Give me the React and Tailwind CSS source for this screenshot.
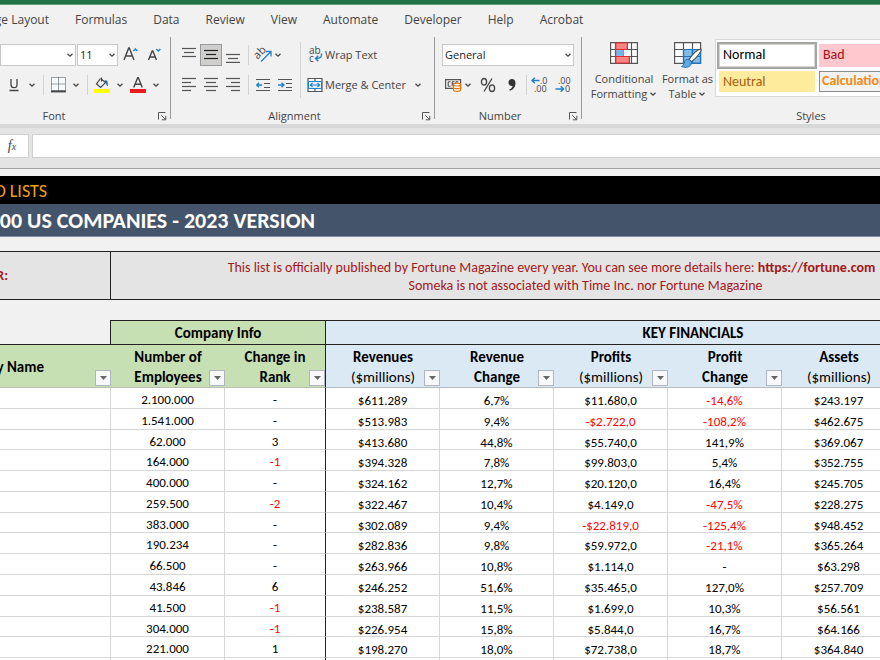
import React, { useState } from 'react';

const tabs = ['Formulas', 'Data', 'Review', 'View', 'Automate', 'Developer', 'Help', 'Acrobat'];

const rows = [
  ['2.100.000', '-', '$611.289', '6,7%', '$11.680,0', '-14,6%', '$243.197'],
  ['1.541.000', '-', '$513.983', '9,4%', '-$2.722,0', '-108,2%', '$462.675'],
  ['62.000', '3', '$413.680', '44,8%', '$55.740,0', '141,9%', '$369.067'],
  ['164.000', '-1', '$394.328', '7,8%', '$99.803,0', '5,4%', '$352.755'],
  ['400.000', '-', '$324.162', '12,7%', '$20.120,0', '16,4%', '$245.705'],
  ['259.500', '-2', '$322.467', '10,4%', '$4.149,0', '-47,5%', '$228.275'],
  ['383.000', '-', '$302.089', '9,4%', '-$22.819,0', '-125,4%', '$948.452'],
  ['190.234', '-', '$282.836', '9,8%', '$59.972,0', '-21,1%', '$365.264'],
  ['66.500', '-', '$263.966', '10,8%', '$1.114,0', '-', '$63.298'],
  ['43.846', '6', '$246.252', '51,6%', '$35.465,0', '127,0%', '$257.709'],
  ['41.500', '-1', '$238.587', '11,5%', '$1.699,0', '10,3%', '$56.561'],
  ['304.000', '-1', '$226.954', '15,8%', '$5.844,0', '16,7%', '$64.166'],
  ['221.000', '1', '$198.270', '18,0%', '$72.738,0', '18,7%', '$364.840'],
  ['', '', '', '', '', '', ''],
];

const columns = [
  { top: 'Number of', bottom: 'Employees', info: true },
  { top: 'Change in', bottom: 'Rank', info: true, last: true },
  { top: 'Revenues', bottom: '($millions)', unit: true },
  { top: 'Revenue', bottom: 'Change' },
  { top: 'Profits', bottom: '($millions)', unit: true },
  { top: 'Profit', bottom: 'Change' },
  { top: 'Assets', bottom: '($millions)', unit: true },
];

function Chevron() {
  return (
    <svg width="8" height="8" viewBox="0 0 8 8" fill="none" stroke="#444" strokeWidth="1.3">
      <path d="M1.5 2.8 4 5.2 6.5 2.8" />
    </svg>
  );
}

function MoreButton({ label }) {
  return (
    <button aria-label={label} className="flex h-5 w-2 items-center justify-center">
      <Chevron />
    </button>
  );
}

function IconButton({ label, className, children }) {
  return (
    <button aria-label={label} className={`flex h-[22px] shrink-0 items-center justify-center ${className}`}>
      {children}
    </button>
  );
}

function Divider({ className = '' }) {
  return <div className={`h-5 w-px bg-[#d2d2d2] ${className}`} />;
}

function RibbonSelect({ label, value, className }) {
  return (
    <div className={`relative h-[22px] ${className}`}>
      <select
        aria-label={label}
        defaultValue={value}
        className="h-full w-full appearance-none border border-[#c8c8c8] bg-white pl-[2px] text-[11px] text-[#222]"
      >
        <option value={value}>{value}</option>
      </select>
      <span className="pointer-events-none absolute right-[2px] top-[7px]">
        <Chevron />
      </span>
    </div>
  );
}

function Group({ label, className, labelClass = '', launcher = true, children }) {
  return (
    <div className={`flex shrink-0 flex-col ${className}`}>
      <div className="h-[71px]">{children}</div>
      <div className="flex h-4 items-center">
        <span className={`flex-1 text-center leading-4 ${labelClass}`}>{label}</span>
        {launcher && (
          <button aria-label={`${label} settings`} className="flex h-4 w-4 items-center justify-center">
            <svg width="9" height="9" viewBox="0 0 9 9" fill="none" stroke="#555">
              <path d="M.5 7.5v-7h7M3.2 3.2l4.3 4.3M7.8 3.8v4h-4" />
            </svg>
          </button>
        )}
      </div>
    </div>
  );
}

// Text lines, used by every paragraph alignment icon
function Lines({ lines, dark }) {
  return (
    <svg width="14" height="16" viewBox="0 0 14 16" stroke={dark ? '#222' : '#555'} strokeWidth="1.2">
      {lines.map(([x1, x2, y]) => (
        <path key={y} d={`M${x1} ${y}H${x2}`} />
      ))}
    </svg>
  );
}

function IndentIcon({ right }) {
  return (
    <svg width="15" height="14" viewBox="0 0 15 14" fill="none" strokeWidth="1.2">
      <path d="M0 1.5h14M8 5.5h6M8 9.5h6M0 12.5h14" stroke="#555" />
      {right ? (
        <path d="M0 7h5.5M3.5 4.8 5.8 7 3.5 9.2" stroke="#1e82cf" strokeWidth="1.5" />
      ) : (
        <path d="M6.2 7H.8M3 4.8.7 7 3 9.2" stroke="#1e82cf" strokeWidth="1.5" />
      )}
    </svg>
  );
}

function DecimalIcon({ decrease }) {
  return (
    <svg width="16" height="18" viewBox="0 0 16 18" fill="none" overflow="visible">
      <g fill="#444" fontSize="9" fontFamily="Open Sans, sans-serif">
        {decrease ? (
          <>
            <text x="3" y="8">.00</text>
            <text x="10" y="16">0</text>
          </>
        ) : (
          <>
            <text x="9" y="8">.0</text>
            <text x="3" y="16">.00</text>
          </>
        )}
      </g>
      {decrease ? (
        <path d="M.5 13h8M5.700 10.200 8.500 13l-2.800 2.800" stroke="#1e82cf" strokeWidth="1.5" />
      ) : (
        <path d="M8.500 4.500H1M3.800 1.700 1 4.500l2.800 2.800" stroke="#1e82cf" strokeWidth="1.5" />
      )}
    </svg>
  );
}

function FontGroup() {
  return (
    <Group label="Font" className="w-[170px]" labelClass="pr-[46px]">
      <div className="flex h-9 items-center">
        <RibbonSelect label="Font name" value="" className="w-[76px]" />
        <RibbonSelect label="Font size" value="11" className="ml-px w-[41px]" />
        <IconButton label="Increase font size" className="ml-[5px] w-4">
          <svg width="16" height="18" viewBox="0 0 16 18" fill="none" strokeWidth="1.4">
            <path d="M1 14 5.700 2h.6L11 14M2.700 10h6.600" stroke="#444" />
            <path d="m10.400 5 2-2 2 2" stroke="#1e82cf" />
          </svg>
        </IconButton>
        <IconButton label="Decrease font size" className="ml-2 w-4">
          <svg width="16" height="18" viewBox="0 0 16 18" fill="none" strokeWidth="1.4">
            <path d="M1.500 14 5.200 5h.6l3.700 9M2.800 11h5.400" stroke="#444" />
            <path d="m9.400 3 2 2 2-2" stroke="#1e82cf" />
          </svg>
        </IconButton>
      </div>
      <div className="flex h-6 items-center">
        <IconButton label="Underline" className="w-7">
          <svg width="10" height="14" viewBox="0 0 10 14" fill="none" stroke="#444" strokeWidth="1.3">
            <path d="M2 1v5.500C2 8.600 3 9.700 5 9.700s3-1.100 3-3.200V1M.5 12.500h9" />
          </svg>
        </IconButton>
        <MoreButton label="Underline options" />
        <Divider className="ml-[7px]" />
        <IconButton label="Borders" className="w-7">
          <svg width="15" height="16" viewBox="0 0 15 16" fill="none" stroke="#444">
            <path d="M.5.5h14v13H.5zM7.500.5v13M.5 7h14" fill="#f4fafd" strokeDasharray="1 1" />
            <path d="M0 14.500h15" strokeWidth="1.800" />
          </svg>
        </IconButton>
        <MoreButton label="Border options" />
        <Divider className="ml-[7px]" />
        <IconButton label="Fill color" className="w-7">
          <svg width="16" height="16" viewBox="0 0 16 16" fill="none">
            <path d="M6.500 1.500 2.500 6.800 6.600 10.500 11.500 5.600 7.500 2.300M7.500.6v4" stroke="#444" strokeWidth="1.200" />
            <path d="M10.500 3.500c2.400-.6 3.800.8 3.300 5.800-1.800-.5-1.200-3.300-2.600-4.100z" fill="#1c6fb5" />
            <path d="M0 12h16v4H0z" fill="#ffff00" />
          </svg>
        </IconButton>
        <MoreButton label="Fill color options" />
        <IconButton label="Font color" className="w-7">
          <svg width="16" height="16" viewBox="0 0 16 16" fill="none">
            <path d="M3.700 10.500 7.700.8h.6l4 9.700M5.200 7.200h5.600" stroke="#444" strokeWidth="1.400" />
            <path d="M0 12h16v4H0z" fill="#ed1c1c" />
          </svg>
        </IconButton>
        <MoreButton label="Font color options" />
      </div>
    </Group>
  );
}

function AlignmentGroup() {
  return (
    <Group label="Alignment" className="w-[263px]">
      <div className="flex">
        <div className="w-[129px] pl-[7px]">
          <div className="flex h-9 items-center">
            <IconButton label="Top align" className="w-[22px]">
              <Lines lines={[[0, 14, 1.5], [2, 12, 5.5], [0, 14, 9.5]]} />
            </IconButton>
            <IconButton label="Middle align" className="w-[22px] border border-[#999] bg-[#d0cfcd]">
              <Lines dark lines={[[0, 14, 3.5], [2, 12, 7.5], [0, 14, 11.5]]} />
            </IconButton>
            <IconButton label="Bottom align" className="w-[22px]">
              <Lines lines={[[0, 14, 7.5], [2, 12, 11.5], [0, 14, 15.4]]} />
            </IconButton>
            <Divider className="ml-1" />
            <IconButton label="Orientation" className="ml-[3px] w-[22px]">
              <svg width="18" height="18" viewBox="0 0 18 18" fill="none" overflow="visible">
                <text x="0" y="11" fontSize="11" fill="#444" fontFamily="Open Sans, sans-serif" transform="rotate(-45 5 8)">ab</text>
                <path d="M7 15.500 16.500 6M12 5.500h5v5" stroke="#1e82cf" strokeWidth="1.300" />
              </svg>
            </IconButton>
            <MoreButton label="Orientation options" />
          </div>
          <div className="flex h-6 items-center">
            <IconButton label="Align left" className="w-[22px]">
              <Lines lines={[[0, 14, 1.5], [0, 9, 5.5], [0, 14, 9.5], [0, 9, 13.5]]} />
            </IconButton>
            <IconButton label="Center" className="w-[22px]">
              <Lines lines={[[0, 14, 1.5], [2, 12, 5.5], [0, 14, 9.5], [2, 12, 13.5]]} />
            </IconButton>
            <IconButton label="Align right" className="w-[22px]">
              <Lines lines={[[0, 14, 1.5], [5, 14, 5.5], [0, 14, 9.5], [5, 14, 13.5]]} />
            </IconButton>
            <Divider className="ml-1" />
            <IconButton label="Decrease indent" className="ml-[3px] w-[22px]">
              <IndentIcon />
            </IconButton>
            <IconButton label="Increase indent" className="w-[22px]">
              <IndentIcon right />
            </IconButton>
          </div>
        </div>
        <div className="mt-[5px] h-14 w-px bg-[#d2d2d2]" />
        <div className="pl-[6px]">
          <button className="flex h-9 items-center gap-[2px]">
            <svg width="16" height="18" viewBox="0 0 16 18" fill="none" overflow="visible">
              <g fill="#444" fontSize="10" fontFamily="Open Sans, sans-serif">
                <text x="2" y="8">ab</text>
                <text x="2" y="16">c</text>
              </g>
              <path d="M14.500 7.500c.5 3.500-1 5-5.500 5M11.300 9.800 8.500 12.500l2.800 2.700" stroke="#1e82cf" strokeWidth="1.400" />
            </svg>
            Wrap Text
          </button>
          <div className="flex h-6 items-center gap-2">
            <button className="flex items-center gap-[2px]">
              <svg width="16" height="16" viewBox="0 0 16 16" fill="none">
                <path d="M1 1.500h14v13H1zM8 1.500v3M8 12v2.500" stroke="#555" fill="#fff" strokeWidth="1.200" />
                <path d="M1.500 4.500h13v7h-13z" fill="#e6f2fb" stroke="#1e82cf" />
                <path d="M3.500 8h9M5.500 6 3.500 8l2 2M10.500 6l2 2-2 2" stroke="#1e82cf" strokeWidth="1.200" />
              </svg>
              Merge &amp; Center
            </button>
            <MoreButton label="Merge options" />
          </div>
        </div>
      </div>
    </Group>
  );
}

function NumberGroup() {
  return (
    <Group label="Number" className="w-[146px]">
      <div className="flex h-9 items-center px-[7px]">
        <RibbonSelect label="Number format" value="General" className="flex-1" />
      </div>
      <div className="flex h-6 items-center pl-[7px]">
        <IconButton label="Accounting format" className="w-[22px]">
          <svg width="17" height="14" viewBox="0 0 17 14" fill="none">
            <path d="M.600 1.600h15v8.800H.6z" stroke="#555" strokeWidth="1.200" />
            <path d="M5.500 3.800H3.200v4.400h2.300M9.500 3.800H7.200v4.400M7.200 6H9M13.200 3.800h-2.300V6" stroke="#444" />
            <path d="M8.500 6.500c0-1.800 7-1.800 7 0v5.500c0 1.800-7 1.800-7 0z" fill="#fff" stroke="#e8790c" strokeWidth="1.200" />
            <path d="M8.500 6.800c0 1.600 7 1.600 7 0M8.500 9.500c0 1.600 7 1.600 7 0" stroke="#e8790c" strokeWidth="1.200" />
          </svg>
        </IconButton>
        <MoreButton label="Accounting options" />
        <IconButton label="Percent style" className="w-8">
          <svg width="16" height="16" viewBox="0 0 16 16" fill="none" stroke="#444" strokeWidth="1.300">
            <ellipse cx="4" cy="4.800" rx="2.600" ry="3.300" />
            <ellipse cx="12" cy="11.200" rx="2.600" ry="3.300" />
            <path d="M12 1.500 4 14.500" />
          </svg>
        </IconButton>
        <IconButton label="Comma style" className="w-4">
          <svg width="8" height="12" viewBox="0 0 8 12" fill="#333">
            <path d="M3.800 0C6.200 0 7.500 1.600 7.500 4.200c0 3.600-2.300 6.700-5.700 7.500l-.5-1.200C3.200 9.700 4.400 8.400 4.600 6.900 2.300 7.400.5 5.900.5 3.600.5 1.500 1.900 0 3.800 0z" />
          </svg>
        </IconButton>
        <Divider className="ml-[6px]" />
        <IconButton label="Increase decimal" className="w-6">
          <DecimalIcon />
        </IconButton>
        <IconButton label="Decrease decimal" className="w-6">
          <DecimalIcon decrease />
        </IconButton>
      </div>
    </Group>
  );
}

function StylesGroup() {
  return (
    <Group label="Styles" className="w-[458px]" launcher={false}>
      <div className="flex pl-[6px]">
        <button className="flex w-[72px] flex-col items-center pt-[5px] leading-[15px]">
          <svg width="28" height="22" viewBox="0 0 28 22" fill="none" className="mb-[7px]">
            <path d="M.6.6h26.800v20.800H.6z" fill="#fff" />
            <path d="M.6.6h26.800v20.800H.6zM.6 7.500h26.800M.6 14.500h26.800M5.500.6v20.800M21.500.6v20.800M13.500.6v20.800" stroke="#555" strokeWidth="1.200" />
            <path d="M5.600 1h11.800v6.500H5.600zM5.600 14.500h13.800v6.500H5.600z" fill="#ff8585" stroke="#e32a2a" strokeWidth="1.200" />
            <path d="M5.600 8.100h8.200v5.800H5.600z" fill="#76b5ea" />
            <path d="M5.600 1v20" stroke="#e32a2a" strokeWidth="1.200" />
          </svg>
          <span>Conditional</span>
          <span className="flex items-center gap-[2px]">Formatting <Chevron /></span>
        </button>
        <button className="flex w-[55px] flex-col items-center pt-[5px] leading-[15px]">
          <svg width="30" height="27" viewBox="0 0 30 27" fill="none" className="mb-[2px]">
            <path d="M1.600.6h26v20.800h-26z" fill="#fff" />
            <path d="M10.500 7.500h17v13.900h-17z" fill="#7fbcec" />
            <path d="M1.600.6h26v20.800h-26zM1.600 7.500h26M1.600 14.500h26M10.500.6v20.800M19.500.6v20.800" stroke="#555" strokeWidth="1.200" />
            <path d="M10.500 21.400V7.500h17M19.500 7.500v13.900M10.500 14.500h17M27.500 9.500v11.900h-17" stroke="#1e74bd" strokeWidth="1.200" />
            <path d="M16 17.500c4-6 9-10.500 12-10.300 1.500.6-3.500 8-9.500 12.600z" fill="#fff" stroke="#555" strokeWidth="1.200" />
            <path d="M16 17.300c-3.500-.3-4.500 1.500-5 4-.4 1.600-1.200 2.500-2.500 3.200 4.500 1.800 10 .8 10-4.300z" fill="#5ea9e4" stroke="#1e74bd" />
          </svg>
          <span className="whitespace-nowrap">Format as</span>
          <span className="flex items-center gap-[2px]">Table <Chevron /></span>
        </button>
        <div className="mt-[2px] grid h-[58px] flex-1 grid-cols-[100px_100px] content-start gap-x-[2px] gap-y-[2px] border border-[#d8d8d8] bg-white p-[2px] pl-px font-[Calibri,Carlito,Lato,sans-serif] text-[14px]">
          <button className="h-[27px] border-2 border-[#a5a5a1] bg-white pb-[2px] pl-1 text-left text-black outline outline-offset-[-3px] outline-[#d5d5d2]">
            Normal
          </button>
          <button className="my-[2px] bg-[#ffc7ce] pb-[2px] pl-1 text-left text-[#a80c16]">Bad</button>
          <button className="mx-[2px] h-[21px] bg-[#ffeb9c] pb-[2px] pl-1 text-left text-[#a5600c]">Neutral</button>
          <button className="h-[21px] border border-[#8c8c8c] bg-[#f2f2f2] pb-[2px] pl-[2px] text-left font-bold leading-[18px] text-[#f08a18]">
            Calculation
          </button>
        </div>
      </div>
    </Group>
  );
}

function RibbonDivider() {
  return <div className="mb-[5px] w-px shrink-0 bg-[#9b9b9b]" />;
}

function FilterButton({ label }) {
  return (
    <button
      aria-label={`Filter ${label}`}
      className="absolute bottom-px right-0 flex h-4 w-4 items-center justify-center border border-[#b0b6c0] bg-[#f6f8fb]"
    >
      <svg width="7" height="4" viewBox="0 0 7 4" fill="#666">
        <path d="M0 0h7L3.500 4z" />
      </svg>
    </button>
  );
}

function CompanyTable() {
  return (
    <table className="mt-5 h-[359px] w-full min-w-[1060px] table-fixed border-separate border-spacing-0 text-center text-black">
      <colgroup>
        <col className="w-[111px]" />
        <col className="w-[114px]" />
        <col className="w-[101px]" />
        <col className="w-[114px]" />
        <col className="w-[114px]" />
        <col className="w-[114px]" />
        <col className="w-[114px]" />
        <col className="w-[114px]" />
        <col />
      </colgroup>
      <thead className="text-[15px]">
        <tr className="h-[25px]">
          <td className="border-b border-r border-[#222]" />
          <th colSpan={2} className="border-y border-r border-[#222] bg-[#c6e0b4] p-0 leading-5">Company Info</th>
          <th colSpan={6} className="border-y border-[#222] bg-[#dbe9f5] p-0 leading-5">KEY FINANCIALS</th>
        </tr>
        <tr className="h-[43px]">
          <th className="relative border-b border-[#b9bfb5] bg-[#c6e0b4] px-0 pb-0 pt-[2px]">
            <div className="flex w-11 justify-end overflow-hidden whitespace-nowrap">Company Name</div>
            <FilterButton label="Company Name" />
          </th>
          {columns.map((col, i) => (
            <th
              key={i}
              className={`relative border-b px-0 pb-0 pt-[2px] leading-5 ${col.info ? 'border-[#b9bfb5] bg-[#c6e0b4]' : 'border-[#b4bac0] bg-[#dbe9f5]'} ${col.last ? 'border-r border-r-[#222]' : ''}`}
            >
              <div>{col.top}</div>
              <div className={col.unit ? 'font-normal' : ''}>{col.bottom}</div>
              <FilterButton label={`${col.top} ${col.bottom}`} />
            </th>
          ))}
          <th className="border-b border-[#b4bac0] bg-[#dbe9f5]" />
        </tr>
      </thead>
      <tbody className="bg-white text-[13px] leading-[13px]">
        {rows.map((row, r) => (
          <tr key={r}>
            <td className="border-b border-r border-[#d6d6d6] p-0" />
            {row.map((value, c) => (
              <td
                key={c}
                className={`border-b border-r border-[#d6d6d6] px-0 pb-0 align-top ${c > 1 ? 'pt-[6px]' : 'pt-[5px]'} ${c === 1 ? 'border-r-[#222]' : ''} ${value.length > 1 && value[0] === '-' ? 'text-[#ff0000]' : ''}`}
              >
                {value || '\u00a0'}
              </td>
            ))}
            <td className="border-b border-[#d6d6d6] p-0" />
          </tr>
        ))}
      </tbody>
    </table>
  );
}

export default function App() {
  const [formula, setFormula] = useState('');

  return (
    <div className="flex h-screen flex-col overflow-hidden bg-[#f1f1f1] font-['Segoe_UI','Open_Sans','Noto_Sans',sans-serif] text-[11px] text-[#444]">
      <div className="h-[5px] shrink-0 border-b border-[#5fa37c] bg-[#217346]" />

      {/* Ribbon tabs */}
      <nav className="flex h-8 shrink-0 items-center gap-[26px] pb-[2px] text-[12px]">
        <button className="flex w-[49px] justify-end overflow-hidden whitespace-nowrap">Page Layout</button>
        {tabs.map((tab) => (
          <button key={tab}>{tab}</button>
        ))}
      </nav>

      {/* Ribbon */}
      <div className="flex h-[87px] shrink-0 overflow-hidden">
        <FontGroup />
        <RibbonDivider />
        <AlignmentGroup />
        <RibbonDivider />
        <NumberGroup />
        <RibbonDivider />
        <StylesGroup />
      </div>

      {/* Formula bar */}
      <div className="h-1 shrink-0 bg-[#d8d8d8]" />
      <div className="flex h-[41px] shrink-0 gap-[3px] border-b border-[#a3a3a3] bg-[#e4e4e4] pb-[10px] pt-[6px]">
        <button aria-label="Insert function" className="w-[29px] border border-l-0 border-[#cfcfcf] bg-white pr-1 font-['Liberation_Serif',serif] text-[14px] italic leading-none text-[#444]">
          f<span className="text-[10px]">x</span>
        </button>
        <input
          aria-label="Formula bar"
          value={formula}
          onChange={(e) => setFormula(e.target.value)}
          className="min-w-0 flex-1 border border-r-0 border-[#cfcfcf] bg-white px-2 outline-none"
        />
      </div>

      {/* Sheet */}
      <main className="min-h-0 flex-1 overflow-hidden pt-[7px] font-[Calibri,Carlito,Lato,sans-serif]">
        <div className="h-7 bg-black">
          <div className="flex w-[47px] justify-end overflow-hidden whitespace-nowrap pt-px text-[18px] leading-7 text-[#f0a010]">D LISTS</div>
        </div>
        <div className="h-[33px] border-b border-[#8490a5] bg-[#44546a]">
          <h1 className="flex w-[315px] justify-end overflow-hidden whitespace-nowrap pt-px text-[22px] font-bold leading-8 text-white">
            00 US COMPANIES - 2023 VERSION
          </h1>
        </div>

        <div className="mt-[14px] grid min-w-[1060px] grid-cols-[111px_1fr] border-y border-[#222] bg-[#e4e4e4] text-[14px] leading-[18px] text-[#a31919]">
          <div className="flex items-center border-r border-[#222]">
            <b className="flex w-2 justify-end overflow-hidden">DISCLAIMER:</b>
          </div>
          <div className="pb-1 pt-[7px] text-center">
            <p className="pr-[68px]">
              This list is officially published by Fortune Magazine every year. You can see more details here:{' '}
              <a href="https://fortune.com" className="font-bold">https://fortune.com</a>
            </p>
            <p>Someka is not associated with Time Inc. nor Fortune Magazine</p>
          </div>
        </div>

        <CompanyTable />
      </main>
    </div>
  );
}
